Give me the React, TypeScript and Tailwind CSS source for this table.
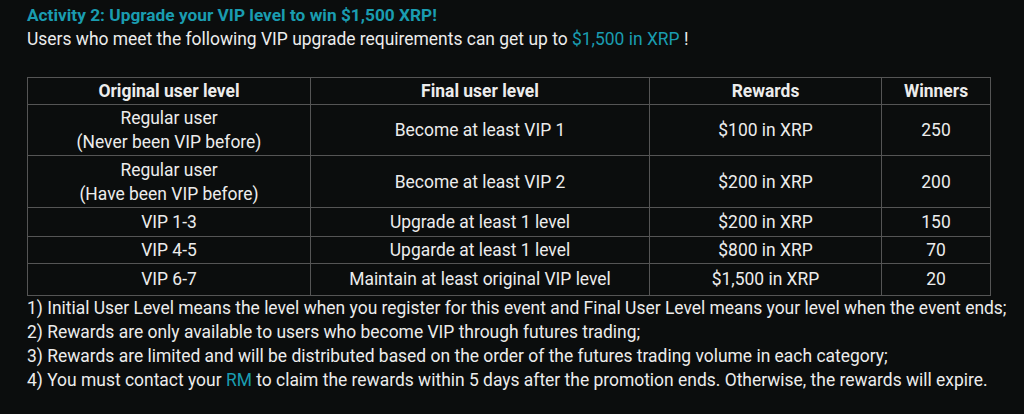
import React from "react";

const rows: [React.ReactNode, string, string, string][] = [
  [<>Regular user<br />(Never been VIP before)</>, "Become at least VIP 1", "$100 in XRP", "250"],
  [<>Regular user<br />(Have been VIP before)</>, "Become at least VIP 2", "$200 in XRP", "200"],
  ["VIP 1-3", "Upgrade at least 1 level", "$200 in XRP", "150"],
  ["VIP 4-5", "Upgarde at least 1 level", "$800 in XRP", "70"],
  ["VIP 6-7", "Maintain at least original VIP level", "$1,500 in XRP", "20"],
];

const pad = [
  "py-[1px]",
  "py-[1.5px]",
  "pt-[2px] pb-[2px]",
  "py-[1px]",
  "pt-[3px] pb-[4px]",
];

export default function App() {
  return (
    <div
      className="w-[1024px] h-[414px] bg-[#0b0d0d] text-[#ececec] text-[17.45px] leading-[24px] pl-[27px] pt-[3px] overflow-hidden"
      style={{ fontFamily: "Roboto, 'Liberation Sans', sans-serif" }}
    >
      <div className="font-bold text-[17.3px] text-[#1a9cb0]">Activity 2: Upgrade your VIP level to win $1,500 XRP!</div>
      <div>
        Users who meet the following VIP upgrade requirements can get up to{" "}
        <span className="text-[#1a9cb0]">$1,500 in XRP</span> !
      </div>
      <table className="mt-[26px] w-[963px] table-fixed border-collapse text-center">
        <colgroup>
          <col className="w-[283px]" />
          <col className="w-[339px]" />
          <col className="w-[232px]" />
          <col className="w-[109px]" />
        </colgroup>
        <thead>
          <tr>
            {["Original user level", "Final user level", "Rewards", "Winners"].map((h) => (
              <th key={h} className="border border-[#555] py-[1px] font-bold">
                {h}
              </th>
            ))}
          </tr>
        </thead>
        <tbody>
          {rows.map((r, i) => (
            <tr key={i}>
              {r.map((c, j) => (
                <td key={j} className={"border border-[#555] " + pad[i]}>
                  {c}
                </td>
              ))}
            </tr>
          ))}
        </tbody>
      </table>
      <div>1) Initial User Level means the level when you register for this event and Final User Level means your level when the event ends;</div>
      <div>2) Rewards are only available to users who become VIP through futures trading;</div>
      <div>3) Rewards are limited and will be distributed based on the order of the futures trading volume in each category;</div>
      <div>
        4) You must contact your <span className="text-[#1a9cb0]">RM</span> to claim the rewards within 5 days after the promotion ends. Otherwise, the rewards will expire.
      </div>
    </div>
  );
}
